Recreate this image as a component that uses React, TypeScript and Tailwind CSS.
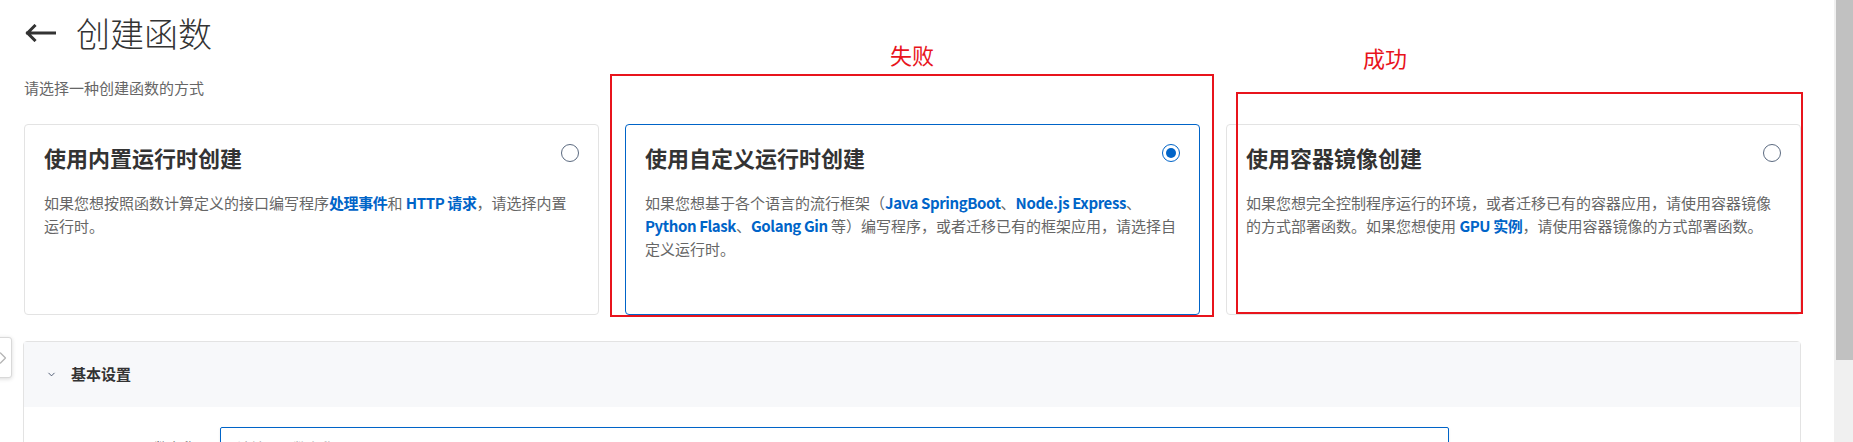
import { ChevronDown, ChevronRight } from "lucide-react";

const FONT = { fontFamily: '"Noto Sans CJK SC", "Noto Sans", sans-serif' };

type Mode = {
  title: string;
  selected?: boolean;
  desc: React.ReactNode;
};

const Link = ({ children }: { children: React.ReactNode }) => (
  <span className="font-bold tracking-[-0.4px] text-[#0064c8]">{children}</span>
);

const MODES: Mode[] = [
  {
    title: "使用内置运行时创建",
    desc: (
      <>
        如果您想按照函数计算定义的接口编写程序<Link>处理事件</Link>和 <Link>HTTP 请求</Link>，请选择内置运行时。
      </>
    ),
  },
  {
    title: "使用自定义运行时创建",
    selected: true,
    desc: (
      <>
        如果您想基于各个语言的流行框架（<Link>Java SpringBoot</Link>、<Link>Node.js Express</Link>、
        <Link>Python Flask</Link>、<Link>Golang Gin</Link> 等）编写程序，或者迁移已有的框架应用，请选择自定义运行时。
      </>
    ),
  },
  {
    title: "使用容器镜像创建",
    desc: (
      <>
        如果您想完全控制程序运行的环境，或者迁移已有的容器应用，请使用容器镜像的方式部署函数。如果您想使用 <Link>GPU 实例</Link>，请使用容器镜像的方式部署函数。
      </>
    ),
  },
];

function Radio({ on }: { on?: boolean }) {
  if (on) {
    return (
      <span className="mt-[2px] flex h-[18px] w-[18px] shrink-0 items-center justify-center rounded-full border-[1.5px] border-[#0064c8] bg-white">
        <span className="h-[10px] w-[10px] rounded-full bg-[#0064c8]" />
      </span>
    );
  }
  return <span className="mt-[2px] h-[18px] w-[18px] shrink-0 rounded-full border border-[#5b6a80] bg-white" />;
}

function ModeCard({ mode }: { mode: Mode }) {
  return (
    <div
      className={`h-[191px] rounded-[4px] border bg-white px-[19px] pt-[17px] ${
        mode.selected ? "border-[#0064c8]" : "border-[#e3e3e3]"
      }`}
    >
      <div className="flex items-start justify-between">
        <h3 className="text-[22px] leading-[30px] font-semibold text-[#333]">{mode.title}</h3>
        <Radio on={mode.selected} />
      </div>
      <p className="mt-[19px] text-[15px] leading-[23px] text-[#666]">{mode.desc}</p>
    </div>
  );
}

function BackArrow() {
  return (
    <svg width="32" height="18" viewBox="0 0 32 18" className="shrink-0">
      <path d="M31 9H3.5M10.5 2L3.5 9l7 7" fill="none" stroke="#333" strokeWidth="3" strokeLinecap="square" />
    </svg>
  );
}

export default function App() {
  return (
    <div className="relative flex h-[442px] w-full overflow-hidden bg-white" style={FONT}>
      <main className="min-w-0 flex-1 pl-[24px] pr-[33px]">
        <div className="flex h-[66px] items-center gap-[20px]">
          <BackArrow />
          <h1 className="text-[34px] leading-[40px] font-light text-[#333]">创建函数</h1>
        </div>
        <p className="mt-[11px] text-[15px] leading-[22px] text-[#666]">请选择一种创建函数的方式</p>

        <div className="mt-[25px] grid grid-cols-3 gap-[26px]">
          {MODES.map((m) => (
            <ModeCard key={m.title} mode={m} />
          ))}
        </div>

        <section className="-ml-px mt-[26px] rounded-t-[4px] border border-[#e3e3e3]">
          <div className="flex h-[65px] items-center gap-[14px] bg-[#f7f8fa] pl-[22px]">
            <ChevronDown size={11} strokeWidth={1.75} className="text-[#2b3a55]" />
            <span className="text-[15px] font-semibold text-[#333]">基本设置</span>
          </div>
          <div className="flex items-center pt-[20px] pb-[20px]">
            <label className="w-[172px] text-right text-[14px] text-[#555]">函数名称</label>
            <div className="ml-[24px] flex h-[40px] w-[1229px] items-center justify-between rounded-[2px] border border-[#0064c8] pl-[16px] pr-[10px] shadow-[0_1px_3px_rgba(0,0,0,0.08)]">
              <span className="text-[14px] text-[#aaa]">请输入函数名称</span>
              <span className="text-[13px] text-[#999]">0/64</span>
            </div>
          </div>
        </section>
      </main>

      {/* fake scrollbar */}
      <div className="flex w-[19px] shrink-0 flex-col bg-[#f0f0f0]">
        <div className="ml-[2px] h-[360px] w-[17px] bg-[#c1c1c1]" />
      </div>

      {/* collapsed sidebar tab */}
      <div className="absolute left-[-12px] top-[337px] flex h-[41px] w-[24px] items-center justify-end rounded-[3px] border border-[#d9d9d9] bg-white shadow-[0_1px_4px_rgba(0,0,0,0.15)]">
        <ChevronRight size={20} strokeWidth={1.5} className="-mr-[2px] text-[#b5b5b5]" />
      </div>

      {/* annotations */}
      <div className="pointer-events-none absolute left-[610px] top-[74px] h-[243px] w-[604px] border-2 border-[#e8141c]" />
      <span className="absolute left-[890px] top-[40px] text-[22px] leading-[28px] text-[#e8141c]">失败</span>
      <div className="pointer-events-none absolute left-[1236px] top-[92px] h-[222px] w-[567px] border-2 border-[#e8141c]" />
      <span className="absolute left-[1363px] top-[43px] text-[22px] leading-[28px] text-[#e8141c]">成功</span>
    </div>
  );
}
